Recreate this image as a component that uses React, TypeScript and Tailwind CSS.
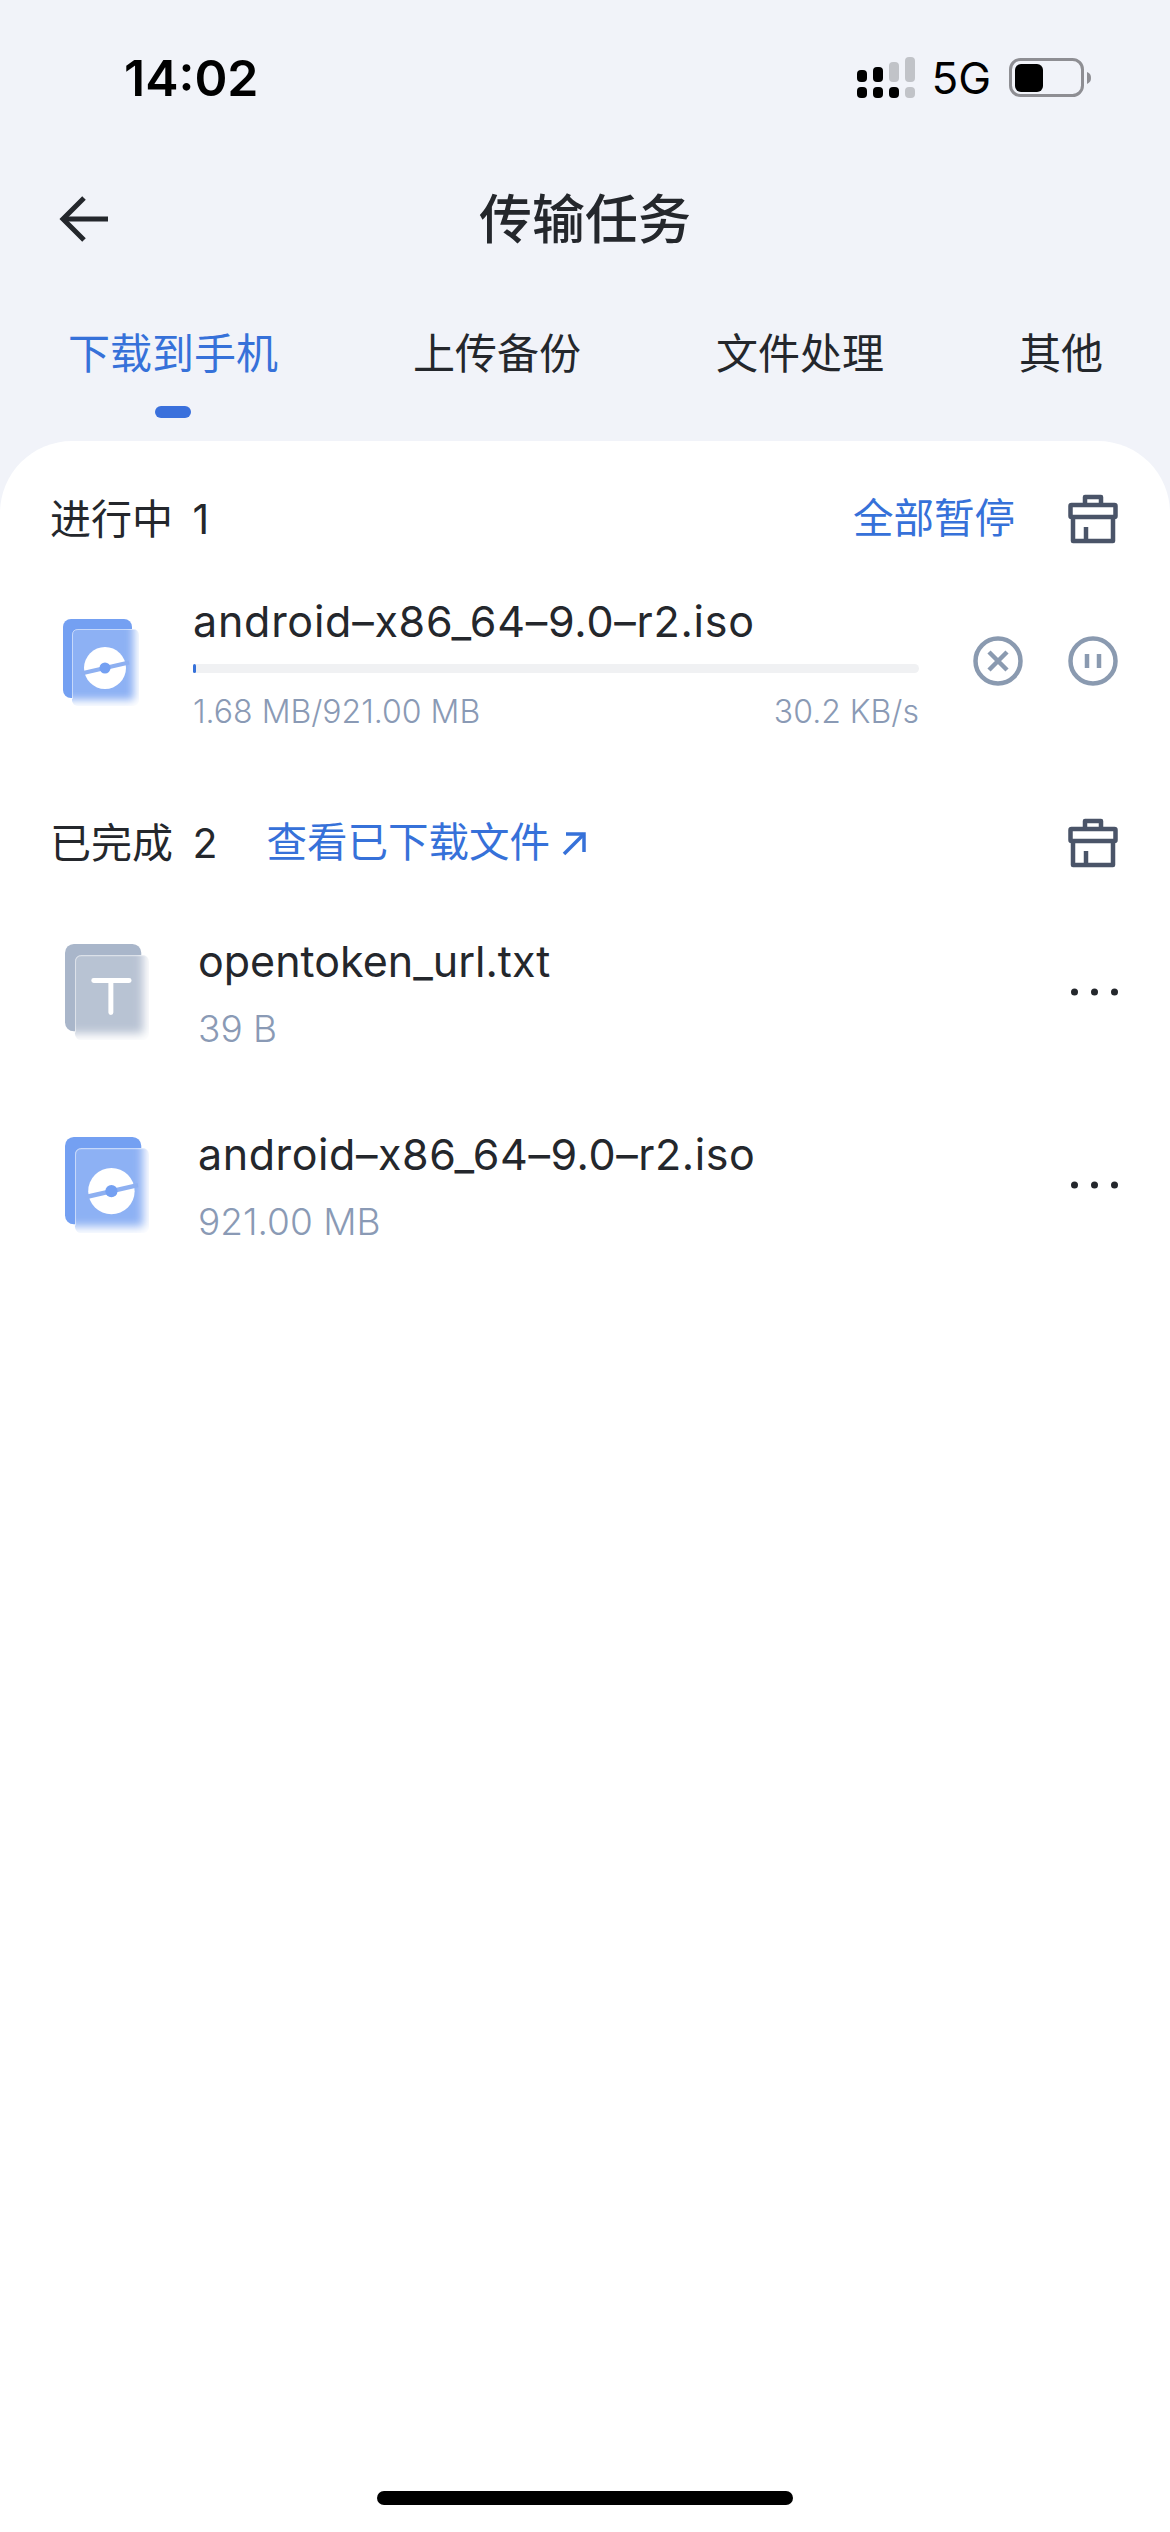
const font = "font-['Inter','Noto_Sans_CJK_SC',sans-serif]";

function SignalIcon() {
  return (
    <svg width="58" height="42" viewBox="0 0 58 42">
      <g fill="#000">
        <rect x="0" y="13" width="10" height="12" rx="4" />
        <rect x="16" y="10" width="10" height="15" rx="4" />
        <rect x="0" y="30" width="10" height="11" rx="4" />
        <rect x="16" y="30" width="10" height="11" rx="4" />
        <rect x="32" y="30" width="10" height="11" rx="4" />
      </g>
      <g fill="#c1c3c8">
        <rect x="32" y="5" width="10" height="20" rx="4" />
        <rect x="48" y="0" width="10" height="25" rx="4" />
        <rect x="48" y="30" width="10" height="11" rx="4" />
      </g>
    </svg>
  );
}

function BatteryIcon() {
  return (
    <svg width="83" height="40" viewBox="0 0 83 40">
      <rect x="1.5" y="1.5" width="72" height="36" rx="10" fill="none" stroke="#8e8e93" strokeWidth="3" />
      <rect x="6" y="6" width="28" height="28" rx="6" fill="#000" />
      <path d="M78 14 C81 15 82 17 82 20 C82 23 81 24 78 26 Z" fill="#8e8e93" />
    </svg>
  );
}

function BackIcon() {
  return (
    <svg width="50" height="46" viewBox="0 0 50 46" fill="none" stroke="#24272c" strokeWidth="5">
      <path d="M25 2 L4 23 L25 44" />
      <path d="M4 23 H49" />
    </svg>
  );
}

function BroomIcon() {
  return (
    <svg width="50" height="50" viewBox="0 0 50 50" fill="none" stroke="#4a5468" strokeWidth="4.5" strokeLinejoin="round">
      <path d="M17 11 V3 H33 V11" />
      <rect x="2.5" y="11" width="45" height="12" rx="1" />
      <path d="M5 23 V47 H45 V23" />
      <path d="M18 33 V47" />
    </svg>
  );
}

function CancelIcon() {
  return (
    <svg width="50" height="50" viewBox="0 0 50 50" fill="none" stroke="#8a9ab0" strokeWidth="4.5">
      <circle cx="25" cy="25" r="22.5" />
      <path d="M16 16 L34 34 M34 16 L16 34" />
    </svg>
  );
}

function PauseIcon() {
  return (
    <svg width="50" height="50" viewBox="0 0 50 50" fill="none" stroke="#8a9ab0" strokeWidth="4.5">
      <circle cx="25" cy="25" r="22.5" />
      <path d="M19 18 V32 M31 18 V32" />
    </svg>
  );
}

function MoreIcon() {
  return (
    <svg width="47" height="8" viewBox="0 0 47 8" fill="#24272c">
      <circle cx="3.5" cy="4" r="3.5" />
      <circle cx="23.5" cy="4" r="3.5" />
      <circle cx="43.5" cy="4" r="3.5" />
    </svg>
  );
}

function OutIcon() {
  return (
    <svg width="26" height="26" viewBox="0 0 26 26" fill="none" stroke="#3671d9" strokeWidth="3.5">
      <path d="M5 4 H23 V22" />
      <path d="M23 4 L3 24" />
    </svg>
  );
}

function FileIcon({ id, kind, width }: { id: string; kind: 'disc' | 'text'; width: number }) {
  const isDisc = kind === 'disc';
  const back = isDisc ? '#74a0f2' : '#a9b6ca';
  const front = isDisc ? '#8eb0f1' : '#b8c3d4';

  return (
    <svg width={width} viewBox="0 0 76 87" className="shrink-0">
      <defs>
        <filter id={`${id}-blur`} x="-20%" y="-20%" width="140%" height="140%">
          <feGaussianBlur stdDeviation="4.5" />
        </filter>
        <clipPath id={`${id}-clip`}>
          <rect x="9" y="10" width="67" height="77" rx="6" />
        </clipPath>
      </defs>
      <rect x="0" y="0" width="69" height="79" rx="8" fill={back} />
      {/* frosted front sheet, the back sheet shows through it blurred */}
      <g clipPath={`url(#${id}-clip)`}>
        <rect x="9" y="10" width="67" height="77" fill="#fff" />
        <rect x="-20" y="-20" width="91" height="101" fill={back} filter={`url(#${id}-blur)`} />
        <rect x="9" y="10" width="67" height="77" fill="#fff" opacity="0.18" />
        <path d="M75 10.5 H15 Q9.5 10.5 9.5 16 V80" fill="none" stroke="#fff" strokeOpacity="0.5" />
      </g>
      {isDisc ? (
        <g>
          <circle cx="42" cy="49" r="21" fill="#fff" />
          <path d="M18 54.5 L66 43.5" stroke={front} strokeWidth="4" />
          <circle cx="42" cy="49" r="5.5" fill={back} />
        </g>
      ) : (
        <path d="M26 33 H58 M41.5 33 V62" stroke="#fff" strokeWidth="4.5" strokeLinecap="round" fill="none" />
      )}
    </svg>
  );
}

function SectionHeader({ label, count }: { label: string; count: number }) {
  return (
    <span className="text-[41px] leading-[50px] text-[#24272c] [word-spacing:8px]">
      {label} {count}
    </span>
  );
}

function DoneRow({ id, kind, name, size, wide }: { id: string; kind: 'disc' | 'text'; name: string; size: string; wide?: boolean }) {
  return (
    <div className="flex h-[96px] items-center pl-[65px] pr-[52px]">
      <FileIcon id={id} kind={kind} width={84} />
      <div className="ml-[49px] flex flex-1 flex-col">
        <span className={wide ? 'text-[43px] leading-[50px] tracking-[0.58px] text-[#24272c]' : 'text-[43px] leading-[50px] text-[#24272c]'}>{name}</span>
        <span className="mt-[23px] text-[37px] font-light leading-[40px] text-[#8a9ab5]">{size}</span>
      </div>
      <MoreIcon />
    </div>
  );
}

export default function App() {
  return (
    <div className={`${font} flex h-[2532px] w-[1170px] flex-col bg-[#f1f3f9]`}>
      {/* status bar */}
      <div className="flex h-[118px] items-center pt-[38px] pl-[124px] pr-[78px]">
        <span className="text-[50px] font-semibold leading-none text-black">14:02</span>
        <div className="ml-auto flex items-center">
          <SignalIcon />
          <span className="ml-[16px] text-[44px] leading-none text-black">5G</span>
          <div className="ml-[18px]">
            <BatteryIcon />
          </div>
        </div>
      </div>

      {/* title bar */}
      <div className="relative mt-[51px] flex h-[102px] items-center justify-center">
        <div className="absolute left-[59px] top-[27px]">
          <BackIcon />
        </div>
        <span className="text-[53px] font-medium leading-none text-[#24272c]">传输任务</span>
      </div>

      {/* tabs */}
      <div className="mt-[53px] flex gap-[135px] pl-[68px]">
        <div className="relative text-[42px] leading-[60px] text-[#3671d9]">
          下载到手机
          <div className="absolute left-[87px] top-[82px] h-[12px] w-[36px] rounded-full bg-[#3a70dc]" />
        </div>
        <span className="text-[42px] leading-[60px] text-[#24272c]">上传备份</span>
        <span className="text-[42px] leading-[60px] text-[#24272c]">文件处理</span>
        <span className="text-[42px] leading-[60px] text-[#24272c]">其他</span>
      </div>

      {/* list card */}
      <div className="mt-[57px] flex flex-1 flex-col rounded-t-[72px] bg-white">
        <div className="mt-[53px] flex items-center pl-[50px] pr-[52px]">
          <SectionHeader label="进行中" count={1} />
          <span className="ml-auto text-[40.5px] leading-[50px] text-[#3671d9]">全部暂停</span>
          <div className="ml-[53px]">
            <BroomIcon />
          </div>
        </div>

        <div className="mt-[52px] flex pl-[63px] pr-[52px]">
          <div className="pt-[23px]">
            <FileIcon id="active" kind="disc" width={76} />
          </div>
          <div className="ml-[54px] flex w-[726px] flex-col">
            <span className="text-[43px] leading-[50px] tracking-[0.75px] text-[#24272c]">android–x86_64–9.0–r2.iso</span>
            <div className="mt-[18px] h-[9px] rounded-full bg-[#f0f1f3]">
              <div className="h-full w-[3px] rounded-full bg-[#3671d9]" />
            </div>
            <div className="mt-[19px] flex justify-between text-[32px] font-light leading-[40px] text-[#8a9ab5]">
              <span>1.68 MB/921.00 MB</span>
              <span>30.2 KB/s</span>
            </div>
          </div>
          <div className="ml-auto flex gap-[45px] pt-[40px]">
            <CancelIcon />
            <PauseIcon />
          </div>
        </div>

        <div className="mt-[86px] flex items-center pl-[50px] pr-[52px]">
          <SectionHeader label="已完成" count={2} />
          <span className="ml-[49px] text-[40.5px] leading-[50px] text-[#3671d9]">查看已下载文件</span>
          <div className="ml-[11px]">
            <OutIcon />
          </div>
          <div className="ml-auto">
            <BroomIcon />
          </div>
        </div>

        <div className="mt-[76px]">
          <DoneRow id="txt" kind="text" name="opentoken_url.txt" size="39 B" />
        </div>
        <div className="mt-[97px]">
          <DoneRow id="iso" kind="disc" name="android–x86_64–9.0–r2.iso" size="921.00 MB" wide />
        </div>

        <div className="mt-auto mb-[27px] h-[14px] w-[416px] self-center rounded-full bg-black" />
      </div>
    </div>
  );
}
